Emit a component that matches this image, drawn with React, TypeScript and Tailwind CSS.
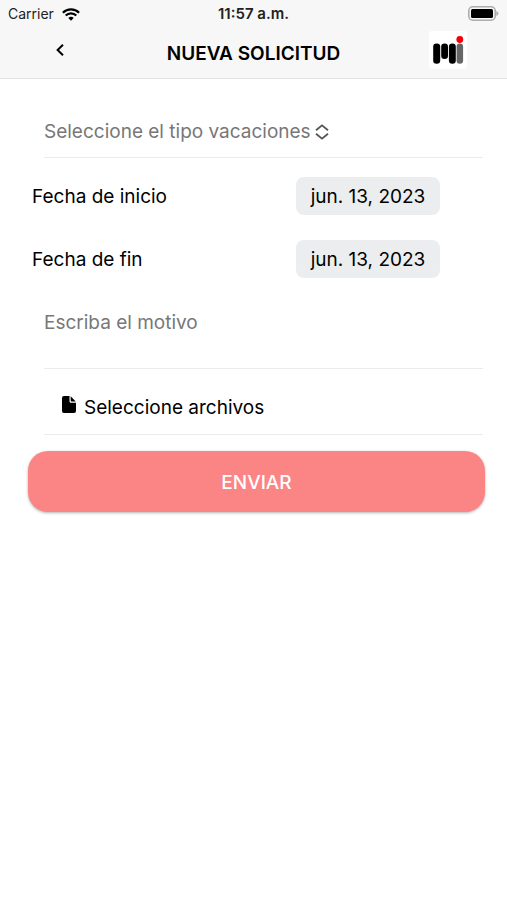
import { useState } from "react"

function WifiIcon() {
  return (
    <svg viewBox="0 0 18 13" className="w-[18px] h-[13px]" fill="none" stroke="#000" strokeWidth="2.2">
      <path d="M0.9 4.7a11.5 11.5 0 0 1 16.2 0" />
      <path d="M3.7 7.5a7.5 7.5 0 0 1 10.6 0" />
      <path d="M9 12.8 6.3 10.1a3.8 3.8 0 0 1 5.4 0z" fill="#000" stroke="none" />
    </svg>
  )
}

function BatteryIcon() {
  return (
    <svg viewBox="0 0 31 15" className="w-[31px] h-[15px]">
      <rect x="0.8" y="0.8" width="26.4" height="13.4" rx="4" fill="#f7f7f7" stroke="#adadad" strokeWidth="1.6" />
      <rect x="3" y="3" width="22" height="9" rx="1.6" fill="#000" />
      <path d="M28.3 5v5c1.3-.5 2.1-1.4 2.1-2.5S29.6 5.5 28.3 5z" fill="#adadad" />
    </svg>
  )
}

function Logo() {
  return (
    <svg viewBox="0 0 38 38" className="w-[38px] h-[38px]" role="img" aria-label="Mi">
      <rect width="38" height="38" rx="3" fill="#fff" />
      <rect x="4.2" y="12.5" width="7" height="20.2" rx="3.3" fill="#000" />
      <rect x="12.2" y="12.5" width="6.8" height="15.5" rx="3.3" fill="#000" />
      <rect x="19.9" y="12.5" width="6.9" height="20.2" rx="3.3" fill="#000" />
      <rect x="27.6" y="12.5" width="6.5" height="20.2" rx="3.2" fill="#666" />
      <circle cx="30.8" cy="8.5" r="3.4" fill="#f5000a" />
    </svg>
  )
}

function FileIcon() {
  return (
    <svg viewBox="0 0 14 17" className="w-[14px] h-[17px]">
      <path d="M2 0h5.5v5.2c0 .9.6 1.5 1.5 1.5h5V15a2 2 0 0 1-2 2H2a2 2 0 0 1-2-2V2a2 2 0 0 1 2-2z" fill="#000" />
      <path d="M8.7 0.3 13.7 5.5H9.7a1 1 0 0 1-1-1z" fill="#000" />
    </svg>
  )
}

interface DateRowProps {
  id: string
  label: string
  value: string
  onChange: (value: string) => void
}

function DateRow({ id, label, value, onChange }: DateRowProps) {
  return (
    <div className="flex items-baseline justify-between pl-1 pr-[45px]">
      <label htmlFor={id}>{label}</label>
      <input
        id={id}
        type="text"
        value={value}
        onChange={(e) => onChange(e.target.value)}
        className="w-36 h-[38px] rounded-lg bg-[#ebedee] text-center outline-none"
      />
    </div>
  )
}

export default function App() {
  const [tipo, setTipo] = useState("")
  const [inicio, setInicio] = useState("jun. 13, 2023")
  const [fin, setFin] = useState("jun. 13, 2023")
  const [motivo, setMotivo] = useState("")

  return (
    <div className="min-h-screen bg-white text-black font-['Inter',sans-serif]">
      <header className="bg-[#f7f7f7] border-b border-[#e2e2e2]">
        <div className="grid grid-cols-3 items-center h-7 px-2 text-sm text-[#222]">
          <div className="flex items-center gap-2">
            <span>Carrier</span>
            <WifiIcon />
          </div>
          <span className="text-center text-[15px] font-semibold">11:57 a.m.</span>
          <div className="flex justify-end self-start pt-1.5">
            <BatteryIcon />
          </div>
        </div>
        <div className="grid grid-cols-[1fr_auto_1fr] items-start h-[50px] px-10 pt-0.5">
          <button type="button" aria-label="Regresar" className="flex items-center justify-center w-10 h-10">
            <svg viewBox="0 0 8 12" className="w-2 h-3" fill="none" stroke="#000" strokeWidth="2">
              <path d="M7 0.7 1.6 6 7 11.3" />
            </svg>
          </button>
          <h1 className="self-center text-[19px] font-semibold">NUEVA SOLICITUD</h1>
          <div className="flex items-center justify-end h-10">
            <Logo />
          </div>
        </div>
      </header>

      <form className="pl-7 pr-[22px] text-[19px] leading-6" onSubmit={(e) => e.preventDefault()}>
        <div className="flex items-center gap-1 ml-4 mr-0.5 pt-[41px] pb-[13px] border-b border-[#ebebeb] text-[#777]">
          <select
            aria-label="Tipo de vacaciones"
            value={tipo}
            onChange={(e) => setTipo(e.target.value)}
            className="appearance-none bg-transparent outline-none"
          >
            <option value="">Seleccione el tipo vacaciones</option>
            <option value="anuales">Anuales</option>
          </select>
          <svg viewBox="0 0 14 16" className="w-[14px] h-4" fill="none" stroke="#555" strokeWidth="1.8">
            <path d="M1 6.3 7 1.3 13 6.3M1 9.7 7 14.7 13 9.7" />
          </svg>
        </div>

        <div className="flex flex-col gap-[25px] pt-[19px]">
          <DateRow id="inicio" label="Fecha de inicio" value={inicio} onChange={setInicio} />
          <DateRow id="fin" label="Fecha de fin" value={fin} onChange={setFin} />
        </div>

        <div className="ml-4 mr-0.5 pt-[33px] border-b border-[#ebebeb]">
          <textarea
            aria-label="Motivo"
            placeholder="Escriba el motivo"
            value={motivo}
            onChange={(e) => setMotivo(e.target.value)}
            className="block w-full h-[57px] resize-none outline-none placeholder:text-[#777]"
          />
        </div>

        <div className="ml-4 mr-0.5 pt-[27px] pb-[14px] pl-[18px] border-b border-[#ebebeb]">
          <label className="flex items-start gap-2 w-fit cursor-pointer">
            <FileIcon />
            <span>Seleccione archivos</span>
            <input type="file" multiple className="sr-only" />
          </label>
        </div>

        <button
          type="submit"
          className="block w-full h-[61px] mt-4 pt-0.5 rounded-[20px] bg-[#fb8585] text-white font-medium shadow-[0_1px_3px_rgba(0,0,0,0.3)]"
        >
          ENVIAR
        </button>
      </form>
    </div>
  )
}
